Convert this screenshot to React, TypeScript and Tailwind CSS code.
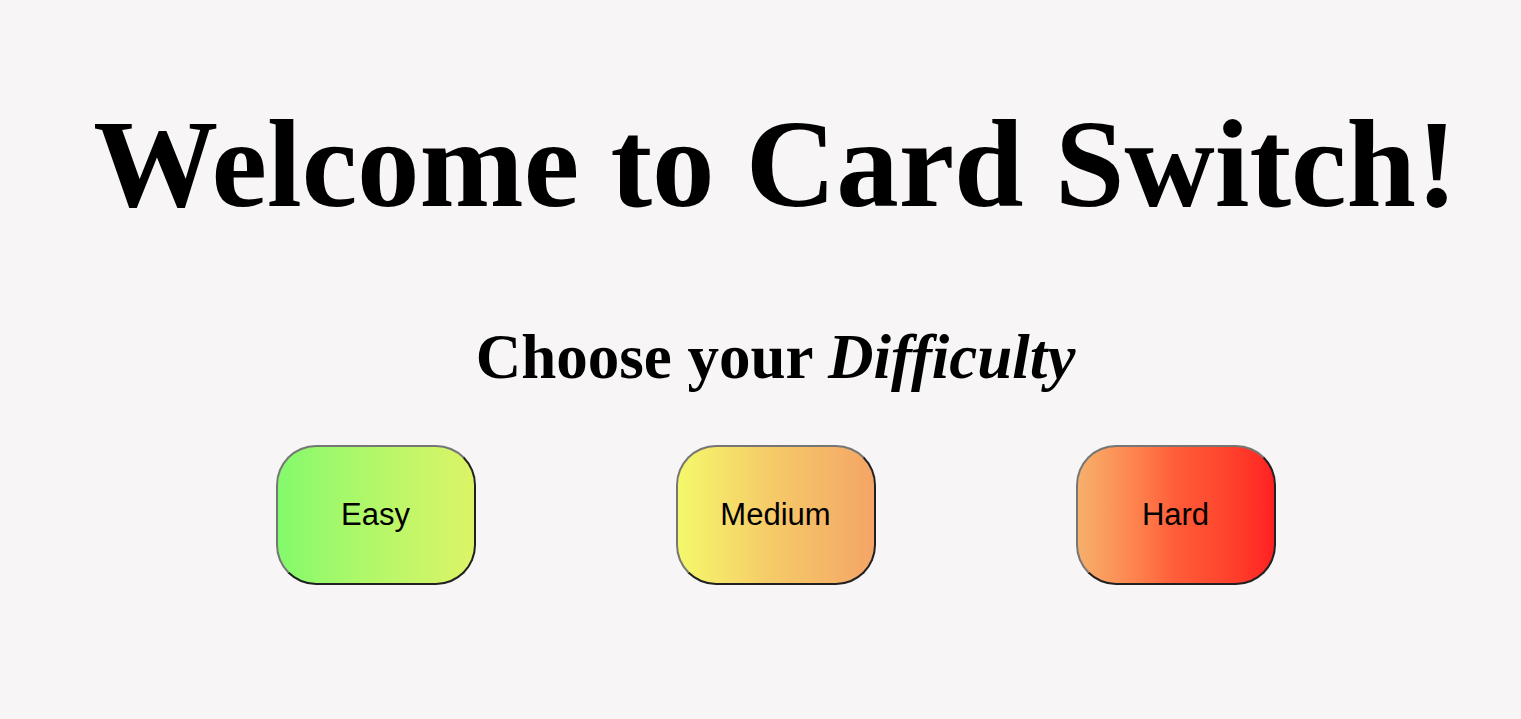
const levels = [
  { name: "Easy", fill: "from-[#82fa6c] to-[#dcf466]" },
  { name: "Medium", fill: "from-[#f4f86b] via-[#f5c868] to-[#f4a566]" },
  { name: "Hard", fill: "from-[#f6b06b] via-[#ff5c38] to-[#ff1f22]" },
];

export default function App() {
  return (
    <main className="flex min-h-screen flex-col items-center bg-[#f7f5f6] pt-[90px] pl-[30px] text-black">
      <h1 className="text-center font-['Liberation_Serif',serif] text-[125px] leading-[148px] font-bold">
        Welcome to Card Switch!
      </h1>
      <h2 className="mt-[82px] text-center font-['Liberation_Serif',serif] text-[63px] leading-[74px] font-bold">
        Choose your <em>Difficulty</em>
      </h2>
      <div className="mt-[51px] flex flex-wrap justify-center gap-[200px]">
        {levels.map(({ name, fill }) => (
          <button
            key={name}
            type="button"
            className={`h-[140px] w-[200px] rounded-[40px] border-2 border-[#767676] [border-style:outset] bg-linear-to-r font-['Liberation_Sans',sans-serif] text-[31px] ${fill}`}
          >
            {name}
          </button>
        ))}
      </div>
    </main>
  );
}
